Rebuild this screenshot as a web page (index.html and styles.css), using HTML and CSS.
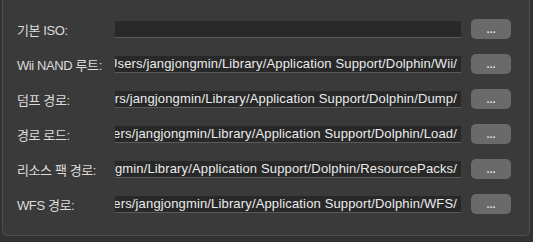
FILE: index.html
```html
<!DOCTYPE html>
<html lang="ko">
<head>
    <meta charset="UTF-8">
    <title>경로 설정</title>
    <link rel="stylesheet" href="styles.css">
</head>
<body>
    <div class="group">
        <div class="row">
            <label class="label">기본 ISO:</label>
            <div class="path"><span></span></div>
            <button class="browse">...</button>
        </div>
        <div class="row">
            <label class="label">Wii NAND 루트:</label>
            <div class="path"><span>/Users/jangjongmin/Library/Application Support/Dolphin/Wii/</span></div>
            <button class="browse">...</button>
        </div>
        <div class="row">
            <label class="label">덤프 경로:</label>
            <div class="path"><span>/Users/jangjongmin/Library/Application Support/Dolphin/Dump/</span></div>
            <button class="browse">...</button>
        </div>
        <div class="row">
            <label class="label">경로 로드:</label>
            <div class="path"><span>/Users/jangjongmin/Library/Application Support/Dolphin/Load/</span></div>
            <button class="browse">...</button>
        </div>
        <div class="row">
            <label class="label">리소스 팩 경로:</label>
            <div class="path"><span>/Users/jangjongmin/Library/Application Support/Dolphin/ResourcePacks/</span></div>
            <button class="browse">...</button>
        </div>
        <div class="row">
            <label class="label">WFS 경로:</label>
            <div class="path"><span>/Users/jangjongmin/Library/Application Support/Dolphin/WFS/</span></div>
            <button class="browse">...</button>
        </div>
    </div>
</body>
</html>
```

FILE: styles.css
```css
body {
    background-color: #323232;
    font-family: "Liberation Sans", "Noto Sans CJK KR", sans-serif;
    font-size: 13px;
    color: #dcdcdc;
    margin: 0;
    padding: 0;
}

.group {
    margin-left: 2px;
    width: 494px;
    height: 216px;
    background-color: #3a3a3a;
    border: 1px solid #4e4e4e;
    border-top: none;
    border-radius: 0 0 5px 5px;
    padding: 19px 18px 0 14px;
    display: flex;
    flex-direction: column;
    gap: 15px;
}

.row {
    display: grid;
    grid-template-columns: 88px 346px 40px;
    column-gap: 10px;
    align-items: center;
    height: 20px;
}

.label {
    white-space: nowrap;
    letter-spacing: -0.4px;
    color: #dcdcdc;
}

.path {
    height: 16px;
    background-color: #282828;
    border-bottom: 1px solid #5a5a5a;
    display: flex;
    justify-content: flex-end;
    align-items: center;
    overflow: hidden;
    padding-right: 4px;
    color: #ececec;
}

.path span {
    flex-shrink: 0;
    white-space: nowrap;
    letter-spacing: 0.15px;
}

.browse {
    width: 40px;
    height: 20px;
    padding: 0 0 3px 0;
    border: none;
    border-radius: 5px;
    background-color: #6a6a6a;
    color: #dedede;
    font-family: "Liberation Sans", sans-serif;
    font-size: 11px;
    font-weight: bold;
    line-height: 20px;
}
```
